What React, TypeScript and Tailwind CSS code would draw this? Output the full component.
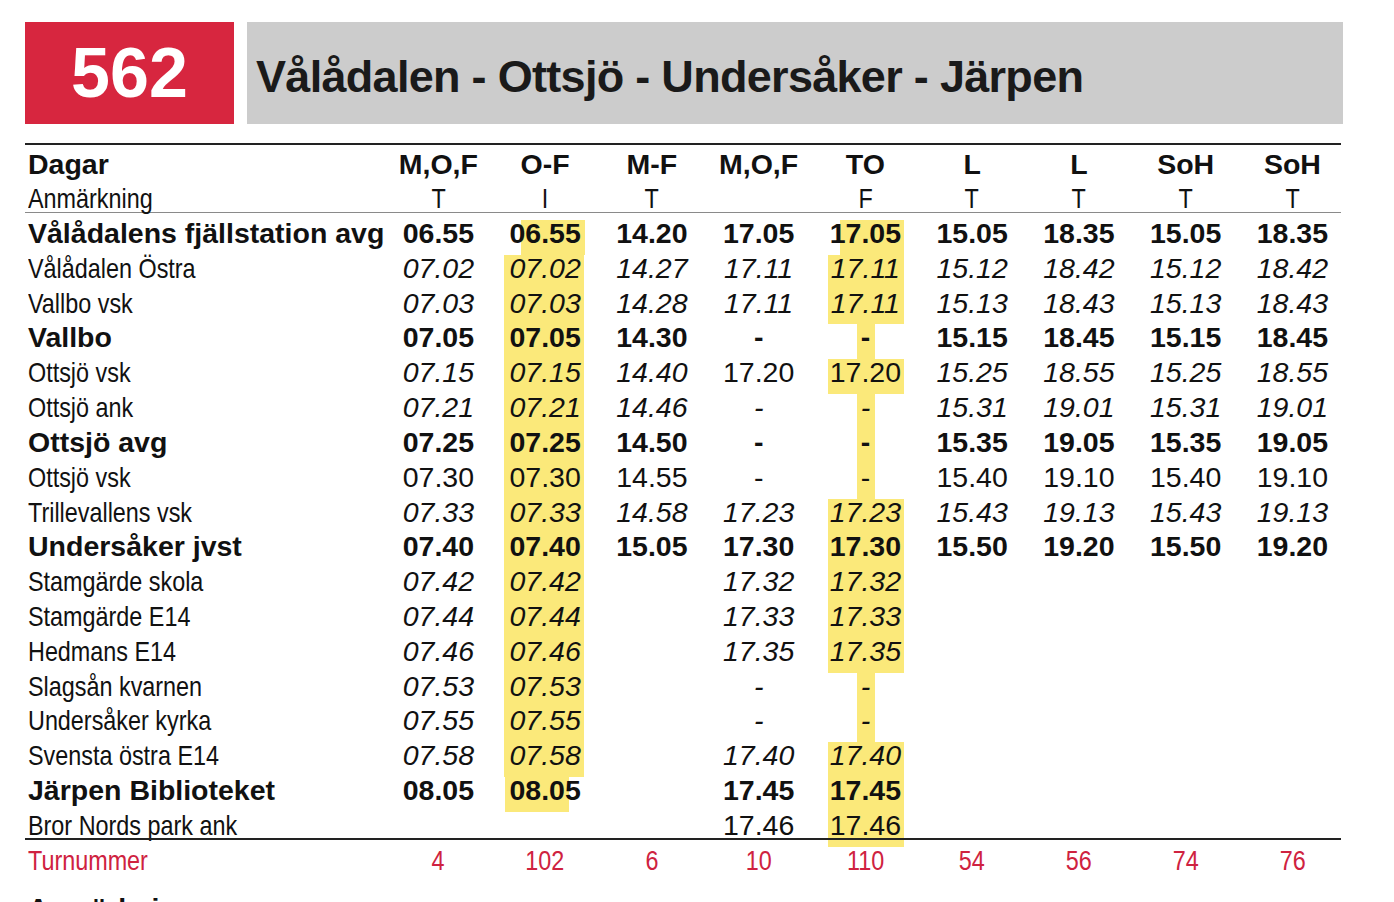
import React from "react";

type Row = {
  name: string;
  kind: "b" | "i" | "r";
  t: string[];
  up?: number[];
};

const rows: Row[] = [
  { name: "Vålådalens fjällstation avg", kind: "b", t: ["06.55", "06.55", "14.20", "17.05", "17.05", "15.05", "18.35", "15.05", "18.35"] },
  { name: "Vålådalen Östra", kind: "i", t: ["07.02", "07.02", "14.27", "17.11", "17.11", "15.12", "18.42", "15.12", "18.42"] },
  { name: "Vallbo vsk", kind: "i", t: ["07.03", "07.03", "14.28", "17.11", "17.11", "15.13", "18.43", "15.13", "18.43"] },
  { name: "Vallbo", kind: "b", t: ["07.05", "07.05", "14.30", "-", "-", "15.15", "18.45", "15.15", "18.45"] },
  { name: "Ottsjö vsk", kind: "i", t: ["07.15", "07.15", "14.40", "17.20", "17.20", "15.25", "18.55", "15.25", "18.55"], up: [3, 4] },
  { name: "Ottsjö ank", kind: "i", t: ["07.21", "07.21", "14.46", "-", "-", "15.31", "19.01", "15.31", "19.01"] },
  { name: "Ottsjö avg", kind: "b", t: ["07.25", "07.25", "14.50", "-", "-", "15.35", "19.05", "15.35", "19.05"] },
  { name: "Ottsjö vsk", kind: "r", t: ["07.30", "07.30", "14.55", "-", "-", "15.40", "19.10", "15.40", "19.10"] },
  { name: "Trillevallens vsk", kind: "i", t: ["07.33", "07.33", "14.58", "17.23", "17.23", "15.43", "19.13", "15.43", "19.13"] },
  { name: "Undersåker jvst", kind: "b", t: ["07.40", "07.40", "15.05", "17.30", "17.30", "15.50", "19.20", "15.50", "19.20"] },
  { name: "Stamgärde skola", kind: "i", t: ["07.42", "07.42", "", "17.32", "17.32", "", "", "", ""] },
  { name: "Stamgärde E14", kind: "i", t: ["07.44", "07.44", "", "17.33", "17.33", "", "", "", ""] },
  { name: "Hedmans E14", kind: "i", t: ["07.46", "07.46", "", "17.35", "17.35", "", "", "", ""] },
  { name: "Slagsån kvarnen", kind: "i", t: ["07.53", "07.53", "", "-", "-", "", "", "", ""] },
  { name: "Undersåker kyrka", kind: "i", t: ["07.55", "07.55", "", "-", "-", "", "", "", ""] },
  { name: "Svensta östra E14", kind: "i", t: ["07.58", "07.58", "", "17.40", "17.40", "", "", "", ""] },
  { name: "Järpen Biblioteket", kind: "b", t: ["08.05", "08.05", "", "17.45", "17.45", "", "", "", ""] },
  { name: "Bror Nords park ank", kind: "r", t: ["", "", "", "17.46", "17.46", "", "", "", ""] },
];

const days = ["M,O,F", "O-F", "M-F", "M,O,F", "TO", "L", "L", "SoH", "SoH"];
const notes = ["T", "I", "T", "", "F", "T", "T", "T", "T"];
const turns = ["4", "102", "6", "10", "110", "54", "56", "74", "76"];

const GRID = "grid grid-cols-[360px_repeat(9,106.75px)]";
// Condensed look: horizontally compressed Liberation Sans (Arial Narrow proportions)
const NARROW_L = "inline-block origin-left scale-x-[0.82]";
const NARROW_C = "inline-block origin-center scale-x-[0.82]";

function highlightClass(col: number, rowIdx: number, val: string): string | null {
  if (!val) return null;
  if (col === 1) {
    if (rowIdx === 0) return "w-[64px] translate-x-[8px]";
    if (rowIdx === 16) return "w-[64px] -translate-x-[8px]";
    return "w-[80px] -translate-x-[1px]";
  }
  if (col === 4) {
    if (val === "-") return "w-[18px] translate-x-[1px]";
    if (rowIdx === 0) return "w-[64px] translate-x-[7px]";
    return "w-[76px] translate-x-[1px]";
  }
  return null;
}

function timeClass(kind: Row["kind"], upright: boolean) {
  if (kind === "b") return "font-bold";
  if (kind === "i" && !upright) return "italic";
  return "";
}

export default function App() {
  return (
    <div className="min-h-[902px] bg-white pt-[22px] pl-[25px] text-[#111] font-['Liberation_Sans',Arial,sans-serif]">
      {/* Header */}
      <div className="flex h-[102px] gap-[13px]">
        <div className="flex w-[209px] items-center justify-center bg-[#d7263f]">
          <span className="text-[70px] font-bold leading-none text-white">562</span>
        </div>
        <div className="flex w-[1096px] items-center bg-[#cccccc] pl-[9px] pt-[6px]">
          <span className="text-[45px] font-bold leading-none tracking-[-0.7px] text-[#1a1a1a]">
            Vålådalen - Ottsjö - Undersåker - Järpen
          </span>
        </div>
      </div>

      {/* Table */}
      <div className="mt-[19px] h-[1.5px] w-[1316px] bg-[#222]" />
      <div className={`${GRID} h-[38px] text-[28.5px] leading-[38px]`}>
        <div className="pl-[3px] font-bold">Dagar</div>
        {days.map((d, i) => (
          <div key={i} className="text-center font-bold">
            {d}
          </div>
        ))}
      </div>
      <div className={`${GRID} h-[29px] text-[28.5px] leading-[30px]`}>
        <div className="pl-[3px]">
          <span className={NARROW_L}>Anmärkning</span>
        </div>
        {notes.map((n, i) => (
          <div key={i} className="text-center">
            <span className={NARROW_C}>{n}</span>
          </div>
        ))}
      </div>
      <div className="h-px w-[1316px] bg-[#8a8a8a]" />

      <div className="mt-[7.5px]">
        {rows.map((r, ri) => (
          <div key={ri} className={`${GRID} h-[34.82px] text-[28.5px]`}>
            <div className="whitespace-nowrap pl-[3px] leading-[26px]">
              {r.kind === "b" ? (
                <span className="font-bold">{r.name}</span>
              ) : (
                <span className={NARROW_L}>{r.name}</span>
              )}
            </div>
            {r.t.map((v, ci) => {
              const hl = highlightClass(ci, ri, v);
              const upright = !!r.up && r.up.includes(ci);
              return (
                <div key={ci} className="grid h-full justify-items-center">
                  {hl && <div className={`col-start-1 row-start-1 h-full bg-[#fbe97a] ${hl}`} />}
                  <span className={`relative col-start-1 row-start-1 self-start leading-[26px] ${timeClass(r.kind, upright)}`}>
                    {v}
                  </span>
                </div>
              );
            })}
          </div>
        ))}
      </div>
      <div className="relative -mt-[8.3px] h-[1.5px] w-[1316px] bg-[#222]" />

      <div className={`${GRID} h-[40px] text-[28.5px] leading-[40px] text-[#cf2240]`}>
        <div className="pl-[3px]">
          <span className={NARROW_L}>Turnummer</span>
        </div>
        {turns.map((t, i) => (
          <div key={i} className="text-center">
            <span className={NARROW_C}>{t}</span>
          </div>
        ))}
      </div>

      <div className="mt-[11px] pl-[3px] text-[28.5px] font-bold leading-[35px]">Anmärkningar</div>
    </div>
  );
}
